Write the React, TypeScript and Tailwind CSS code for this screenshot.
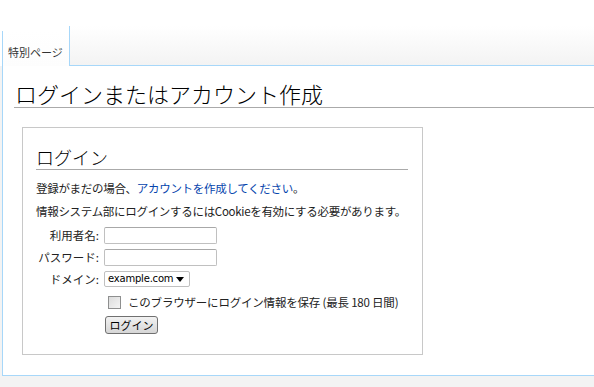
import React from 'react';

const JP = "font-['Noto_Sans_CJK_JP','Noto_Sans',sans-serif]";

const Row = ({ label, children }: { label: string; children: React.ReactNode }) => (
  <div className="flex items-center h-[22px]">
    <div className="w-[63px] text-right text-[11.5px] leading-[18px] text-[#222]">{label}:</div>
    <div className="ml-[5px]">{children}</div>
  </div>
);

const App: React.FC = () => {
  return (
    <div className={`w-[594px] h-[387px] overflow-hidden bg-[#f3f3f3] ${JP}`}>
      {/* top strip + tabs */}
      <div className="h-[26px] bg-white" />
      <div className="flex h-[40px] bg-white">
        <div className="w-[2px]" />
        <div className="mt-[5px] w-[67px] border-l border-[#a7d7f9] bg-gradient-to-b from-white to-[#fdfdfd] flex items-end">
          <span className="pl-[5px] pb-[7px] text-[11px] leading-[14px] text-[#333]">特別ページ</span>
        </div>
        <div className="flex-1 border-l border-b border-[#a7d7f9] bg-gradient-to-b from-white to-[#f3f3f3]" />
      </div>

      {/* content */}
      <div className="ml-[2px] h-[310px] pt-[16px] border-l border-b border-[#a7d7f9] bg-white">
        <h1 className="ml-[11px] pl-[1px] pb-[3px] border-b border-[#aaaaaa] text-[22px] leading-[22px] font-light text-black">
          ログインまたはアカウント作成
        </h1>

        <div className="ml-[19px] mt-[19px] w-[401px] h-[228px] border border-[#c8c8c8] px-[13px] pt-[20px]">
          <h2 className="w-[372px] pb-[3px] border-b border-[#aaaaaa] text-[18px] leading-[18px] font-light text-black">
            ログイン
          </h2>
          <p className="mt-[11px] text-[11.5px] leading-[14px] text-[#222] tracking-[-0.3px]">
            登録がまだの場合、<span className="text-[#0645ad]">アカウントを作成してください</span>。
          </p>
          <p className="mt-[9px] text-[11.5px] leading-[14px] text-[#222] tracking-[-0.3px]">
            情報システム部にログインするにはCookieを有効にする必要があります。
          </p>

          <div className="mt-[6px]">
            <Row label="利用者名">
              <div className="w-[113px] h-[17px] border border-[#c0c0c0] border-t-[#a8a8a8] rounded-[2px] bg-white" />
            </Row>
            <Row label="パスワード">
              <div className="w-[113px] h-[17px] border border-[#c0c0c0] border-t-[#a8a8a8] rounded-[2px] bg-white" />
            </Row>
            <Row label="ドメイン">
              <div className="w-[86px] h-[16px] border border-[#c0c0c0] rounded-[2px] bg-white flex items-center justify-between pl-[3px] pr-[5px]">
                <span className="font-['DejaVu_Sans',sans-serif] text-[10px] leading-[12px] text-black tracking-[-0.2px]">example.com</span>
                <svg width="8" height="5" viewBox="0 0 8 5"><path d="M0 0h8L4 5z" fill="#000" /></svg>
              </div>
            </Row>
          </div>

          <div className="flex items-center mt-[3px] ml-[72px] h-[18px]">
            <div className="w-[13px] h-[13px] border border-[#8e8f8f] bg-gradient-to-br from-[#dcdcdc] to-[#f4f4f4]" />
            <span className="ml-[7px] text-[11.5px] leading-[14px] text-[#222] tracking-[-0.2px]">
              このブラウザーにログイン情報を保存 (最長 180 日間)
            </span>
          </div>

          <button className="mt-[5px] ml-[69px] w-[53px] h-[18px] border border-[#707070] rounded-[3px] bg-gradient-to-b from-[#f2f2f2] to-[#d6d6d6] text-[11px] leading-[12px] text-black flex items-center justify-center">
            ログイン
          </button>
        </div>
      </div>
    </div>
  );
};

export default App;
